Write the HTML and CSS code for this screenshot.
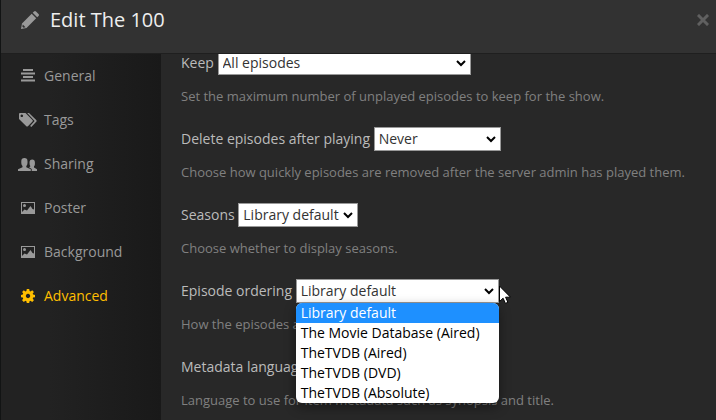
FILE: index.html
```html
<!DOCTYPE html>
<html lang="en">
<head>
  <meta charset="UTF-8">
  <title>Edit The 100</title>
  <meta name="viewport" content="width=device-width, initial-scale=1">
  <link rel="stylesheet" href="styles.css">
</head>
<body>
  <div class="modal">
    <header class="modal-header">
      <svg class="edit-icon" viewBox="0 0 18 18" width="18" height="18">
        <path d="M0 18l1-5.500L10.700 2.800l4.500 4.500L5.500 17zM11.700 1.800L13 .5q1-1 2 0L17.500 3q1 1 0 2L16.200 6.300z"/>
        <path class="hole" d="M1.800 13.500l2.700 2.700-2 .6-1.200-1.200z"/>
      </svg>
      <h1>Edit The 100</h1>
      <button type="button" class="close" aria-label="Close">
        <svg viewBox="0 0 12 12" width="12" height="12"><path d="M2 2l8 8M10 2l-8 8"/></svg>
      </button>
    </header>

    <div class="modal-body">
      <nav class="settings-nav">
        <a href="#general">
          <svg viewBox="0 0 18 14" width="18" height="14"><path d="M4 0h10v2H4zM2 3.500h14v2H2zM4 7h10v2H4zM2 10.500h14v2H2z"/></svg>
          General
        </a>
        <a href="#tags">
          <svg viewBox="0 0 18 14" width="18" height="14"><path fill-rule="evenodd" d="M0 1q0-1 1-1h5.500l7 7q.8.8 0 1.600l-4.600 4.600q-.8.8-1.600 0L0 6zM2.800 1.500a1.300 1.300 0 1 0 .01 0z"/><path d="M8.200 0H10l7.200 7q.9.9 0 1.800L12.300 14l-1.200-1.100L15.600 8z"/></svg>
          Tags
        </a>
        <a href="#sharing">
          <svg class="wide" viewBox="0 0 19 13" width="19" height="13"><path d="M11.500 4.500q0-3 2.700-3t2.700 3v1.700q0 1.300-.9 2.100v1.200l3 1.700V13h-5.300v-1.900L11 9.300l1.300-.8V8q-.8-1-.8-3.500z"/><path d="M3.300 3.200Q3.300 0 6.400 0t3.100 3.200v1.900q0 1.900-1.200 2.900v1.300l4.500 2V13H0v-1.700l4.500-2V8Q3.300 7 3.300 5.100z"/></svg>
          Sharing
        </a>
        <a href="#poster">
          <svg viewBox="0 0 18 14" width="18" height="14"><path fill-rule="evenodd" d="M2 1h14v12H2zM3 2v10h12V2z"/><path d="M3 12v-1l2.500-2.500L8 9.500 11.500 5l2 3L15 8.500V12z"/><circle cx="5.500" cy="4.500" r="1.500"/></svg>
          Poster
        </a>
        <a href="#background">
          <svg viewBox="0 0 18 14" width="18" height="14"><path fill-rule="evenodd" d="M2 1h14v12H2zM3 2v10h12V2z"/><path d="M3 12v-1l2.500-2.500L8 9.500 11.500 5l2 3L15 8.500V12z"/><circle cx="5.500" cy="4.500" r="1.500"/></svg>
          Background
        </a>
        <a href="#advanced" class="active">
          <svg viewBox="0 0 18 14" width="18" height="14"><path fill-rule="evenodd" d="M7.800 0h2.400l.4 2 1 .4L13.200 1.200l1.700 1.700-1.200 1.700.4 1 1.900.3v2.300l-1.900.4-.4 1 1.200 1.700-1.700 1.700-1.700-1.200-1 .4-.3 1.800H7.800l-.4-1.800-1-.4-1.600 1.200-1.700-1.700 1.100-1.700-.4-1L2 8.200V5.900l1.800-.3.4-1-1.100-1.700 1.700-1.700 1.600 1.200 1-.4zM9 4.800a2.200 2.200 0 1 0 .01 0z"/></svg>
          Advanced
        </a>
      </nav>

      <form class="settings">
        <div class="form-group">
          <label for="keep">Keep</label>
          <select id="keep" class="select-xl">
            <option>All episodes</option>
          </select>
          <p class="help">Set the maximum number of unplayed episodes to keep for the show.</p>
        </div>
        <div class="form-group">
          <label for="delete">Delete episodes after playing</label>
          <select id="delete" class="select-md">
            <option>Never</option>
          </select>
          <p class="help">Choose how quickly episodes are removed after the server admin has played them.</p>
        </div>
        <div class="form-group">
          <label for="seasons">Seasons</label>
          <select id="seasons" class="select-sm">
            <option>Library default</option>
          </select>
          <p class="help">Choose whether to display seasons.</p>
        </div>
        <div class="form-group">
          <label for="ordering">Episode ordering</label>
          <span class="dropdown">
            <select id="ordering" class="select-lg">
              <option>Library default</option>
              <option>The Movie Database (Aired)</option>
              <option>TheTVDB (Aired)</option>
              <option>TheTVDB (DVD)</option>
              <option>TheTVDB (Absolute)</option>
            </select>
            <span class="menu" role="listbox" aria-label="Episode ordering">
              <span role="option" aria-selected="true" class="selected">Library default</span>
              <span role="option">The Movie Database (Aired)</span>
              <span role="option">TheTVDB (Aired)</span>
              <span role="option">TheTVDB (DVD)</span>
              <span role="option">TheTVDB (Absolute)</span>
            </span>
            <svg class="cursor" viewBox="0 0 12 19" width="12" height="19"><path d="M.5 1v15.500l3.600-3.300 2.300 5.200 2.500-1.100-2.300-5.100h4.900z"/></svg>
          </span>
          <p class="help">How the episodes are ordered.</p>
        </div>
        <div class="form-group">
          <label for="language">Metadata language</label>
          <select id="language" class="select-sm">
            <option>Library default</option>
          </select>
          <p class="help">Language to use for item metadata such as synopsis and title.</p>
        </div>
      </form>
    </div>
  </div>
</body>
</html>
```
FILE: styles.css
```css
* {
  box-sizing: border-box;
}
body {
  margin: 0;
  background: #121414;
  color: #bbb;
  font-family: "Open Sans", "Noto Sans", sans-serif;
  font-size: 14px;
  line-height: 20px;
}
.modal {
  display: flex;
  flex-direction: column;
  height: 100vh;
  margin-left: 1px;
  background: #282828;
  overflow: hidden;
}

/* header */
.modal-header {
  display: flex;
  align-items: center;
  flex: none;
  gap: 11px;
  padding: 5px 7px 18px 20px;
  border-bottom: 1px solid #1f1f1f;
  background: #323232;
}
.modal-header h1 {
  flex: 1;
  margin: 0;
  color: #eee;
  font-size: 20px;
  font-weight: 400;
  line-height: 30px;
}
.edit-icon {
  fill: #999;
}
.edit-icon .hole {
  fill: #323232;
}
.close {
  display: flex;
  padding: 0;
  border: 0;
  background: none;
  cursor: pointer;
}
.close path {
  stroke: #606060;
  stroke-width: 3;
  stroke-linecap: square;
}

/* sidebar */
.modal-body {
  display: flex;
  flex: 1;
  min-height: 0;
}
.settings-nav {
  flex: none;
  width: 160px;
  background: linear-gradient(to right, #222 30%, #191919);
}
.settings-nav a {
  display: flex;
  align-items: center;
  gap: 7px;
  height: 44px;
  padding-left: 18px;
  color: #999;
  text-decoration: none;
}
.settings-nav svg {
  flex: none;
  fill: currentColor;
}
.settings-nav .wide {
  margin-left: -1px;
}
.settings-nav .active {
  color: #ffbf00;
}

/* form, scrolled slightly under the header */
.settings {
  flex: 1;
  min-width: 0;
  padding: 0 20px;
  overflow: hidden;
}
.form-group {
  margin-bottom: 21px;
}
.form-group:first-child {
  margin-top: -3px;
}
.form-group > label,
.form-group > select,
.dropdown {
  vertical-align: middle;
}
.help {
  margin: 11px 0 0;
  color: #808080;
  font-size: 13px;
  line-height: 20px;
}
select {
  height: 24px;
  padding: 0 4px;
  border: 1px solid #999;
  border-radius: 0;
  appearance: none;
  background: #fff url("data:image/svg+xml,%3Csvg xmlns='http://www.w3.org/2000/svg' width='10' height='7'%3E%3Cpath d='M1 1l4 4 4-4' fill='none' stroke='%23000' stroke-width='2'/%3E%3C/svg%3E") no-repeat right 4px center;
  color: #333;
  font: inherit;
}
.select-sm {
  width: 120px;
}
.select-md {
  width: 127px;
}
.select-lg {
  width: 203px;
}
.select-xl {
  width: 253px;
}

/* open drop-down */
.dropdown {
  display: inline-block;
  position: relative;
}
.dropdown select {
  display: block;
}
.menu {
  position: absolute;
  z-index: 1;
  top: 100%;
  left: 0;
  width: 100%;
  border-radius: 6px;
  overflow: hidden;
  background: #fff;
  color: #000;
  box-shadow: 0 4px 12px rgba(0, 0, 0, .4);
}
.menu span {
  display: block;
  padding-left: 5px;
  white-space: nowrap;
}
.menu .selected {
  background: #1e90ff;
  color: #fff;
}
.cursor {
  position: absolute;
  z-index: 2;
  top: 6px;
  left: 100%;
  fill: #fff;
  stroke: #000;
}
```
